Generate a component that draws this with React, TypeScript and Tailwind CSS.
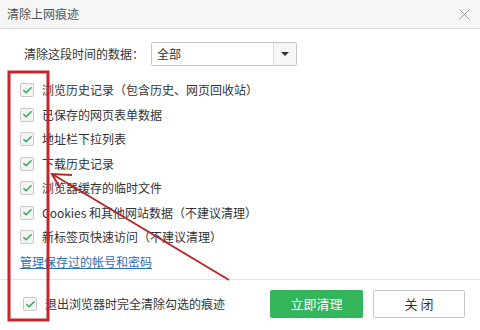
import { Check, X } from 'lucide-react';

const items = [
  '浏览历史记录（包含历史、网页回收站）',
  '已保存的网页表单数据',
  '地址栏下拉列表',
  '下载历史记录',
  '浏览器缓存的临时文件',
  'Cookies 和其他网站数据（不建议清理）',
  '新标签页快速访问（不建议清理）',
];

function Box() {
  return (
    <span className="w-[14px] h-[14px] shrink-0 rounded-[2px] border border-[#c9c9c9] bg-[#f4f4f4] flex items-center justify-center">
      <Check className="w-[11px] h-[11px] text-[#2aa852]" strokeWidth={3} />
    </span>
  );
}

export default function App() {
  return (
    <div
      className="relative w-[480px] h-[330px] bg-white text-[12px] text-[#333] overflow-hidden"
      style={{ fontFamily: '"Microsoft YaHei", "Noto Sans CJK SC", "Noto Sans", sans-serif' }}
    >
      {/* 标题栏 */}
      <div className="h-[29px] bg-[#f6f6f6] border-b border-[#dcdcdc] flex items-center justify-between pl-[7px] pr-[6px]">
        <span className="text-[#555]">清除上网痕迹</span>
        <X className="w-[19px] h-[19px] text-[#888]" strokeWidth={1} />
      </div>

      <div className="flex items-center pl-[24px] mt-[13px] h-[24px]">
        <span>清除这段时间的数据：</span>
        <div className="ml-[7px] w-[146px] h-[24px] border border-[#c8c8c8] rounded-[2px] flex">
          <span className="flex-1 pl-[5px] leading-[22px]">全部</span>
          <span className="w-[23px] border-l border-[#ddd] bg-[#f6f6f6] flex items-center justify-center">
            <span className="w-0 h-0 border-l-[4px] border-r-[4px] border-t-[4px] border-l-transparent border-r-transparent border-t-[#333]" />
          </span>
        </div>
      </div>

      <div className="flex flex-col pl-[20px] mt-[12px]">
        {items.map((t) => (
          <div key={t} className="h-[24.5px] flex items-center gap-[8px]">
            <Box />
            <span>{t}</span>
          </div>
        ))}
        <div className="h-[24.5px] flex items-center">
          <span className="text-[#2f6db5] underline">管理保存过的帐号和密码</span>
        </div>
      </div>

      <div className="mt-[5px] border-t border-[#e6e6e6]" />

      <div className="flex items-center h-[28px] mt-[10px] pl-[23px] pr-[15px]">
        <Box />
        <span className="ml-[8px]">退出浏览器时完全清除勾选的痕迹</span>
        <div className="ml-auto flex gap-[10px]">
          <button className="w-[93px] h-[28px] rounded-[2px] bg-[#33b55c] text-white text-[13px]">立即清理</button>
          <button className="w-[92px] h-[28px] rounded-[2px] border border-[#c8c8c8] bg-white text-[#333] text-[13px]">关 闭</button>
        </div>
      </div>

      {/* 红色标注 */}
      <svg className="absolute left-0 top-0 pointer-events-none" width="480" height="330">
        <rect x="9" y="72" width="39" height="248" fill="none" stroke="#c0262b" strokeWidth="3" />
        <line x1="229" y1="280" x2="52" y2="174" stroke="#b8262a" strokeWidth="2" />
        <polyline points="72,175 52,174 60,188" fill="none" stroke="#b8262a" strokeWidth="2" />
      </svg>
    </div>
  );
}
